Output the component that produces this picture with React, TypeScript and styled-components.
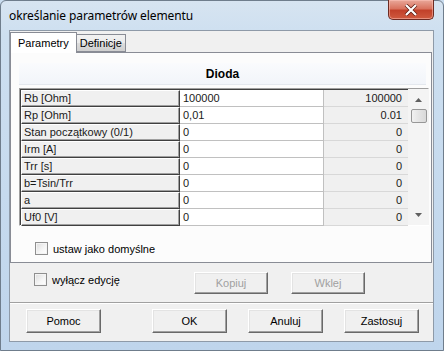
import React from 'react'
import styled, { createGlobalStyle } from 'styled-components'

const GlobalStyle = createGlobalStyle`
  html, body {
    margin: 0;
    padding: 0;
    background: #c9dcef;
  }
  * {
    box-sizing: border-box;
  }
`

const Window = styled.div`
  width: 444px;
  height: 351px;
  display: flex;
  flex-direction: column;
  padding: 0 9px 8px 8px;
  background: linear-gradient(180deg, #d7e4f1 0%, #cddff0 10%, #bfd5ec 100%);
  border: 1px solid #6f7d8c;
  border-radius: 6px 6px 0 0;
  font-family: 'Liberation Sans', Arial, sans-serif;
`

const TitleBar = styled.div`
  height: 29px;
  flex: none;
  display: flex;
  justify-content: space-between;
  align-items: flex-start;
`

const Title = styled.span`
  font-family: 'Noto Sans', 'Open Sans', sans-serif;
  font-size: 12px;
  color: #000;
  padding-top: 6px;
  letter-spacing: -0.1px;
`

const CloseButton = styled.div`
  width: 46px;
  height: 20px;
  margin-top: -1px;
  display: flex;
  align-items: center;
  justify-content: center;
  border: 1px solid #6d2a22;
  border-top: none;
  border-radius: 0 0 5px 5px;
  background: linear-gradient(180deg, #e9a89a 0%, #d9735f 45%, #c2412a 55%, #cf5a3f 100%);
  box-shadow: inset 0 0 0 1px rgba(255, 200, 190, 0.5);
`

const Client = styled.div`
  flex: 1;
  background: #f0f0f0;
  border: 1px solid #8e9aa8;
  display: flex;
  flex-direction: column;
`

const TabStrip = styled.div`
  height: 21px;
  display: flex;
  align-items: flex-end;
  padding-left: 0;
  position: relative;
  z-index: 1;
`

const Tab = styled.div<{ $active?: boolean }>`
  height: ${(p) => (p.$active ? 21 : 18)}px;
  padding: 0 ${(p) => (p.$active ? 7 : 3)}px;
  margin-bottom: ${(p) => (p.$active ? -1 : 0)}px;
  margin-left: ${(p) => (p.$active ? 0 : -1)}px;
  display: flex;
  align-items: center;
  font-size: 11px;
  color: #000;
  border: 1px solid #898c95;
  border-bottom: ${(p) => (p.$active ? 'none' : '1px solid #898c95')};
  background: ${(p) =>
    p.$active ? '#ffffff' : 'linear-gradient(180deg, #f2f2f2 0%, #ebebeb 50%, #dddddd 51%, #cfcfcf 100%)'};
`

const Panel = styled.div`
  height: 211px;
  margin-right: 1px;
  border: 1px solid #898c95;
  background: #fcfcfc;
  display: flex;
  flex-direction: column;
  padding: 10px 5px 0 8px;
`

const Header = styled.div`
  height: 22px;
  display: flex;
  align-items: center;
  justify-content: center;
  font-weight: bold;
  font-size: 12px;
  background: linear-gradient(180deg, #fafbfd 0%, #f2f5fa 100%);
  border-bottom: 1px solid #e4e8ee;
  margin-bottom: 3px;
`

const GridFrame = styled.div`
  display: flex;
  width: 410px;
  height: 138px;
  border-top: 1px solid #a0a0a0;
  border-left: 1px solid #a0a0a0;
  border-right: 1px solid #fff;
  border-bottom: 1px solid #fff;
`

const Table = styled.div`
  display: grid;
  grid-template-columns: 159px 144px 84px;
  grid-auto-rows: 17px;
  border-top: 1px solid #404040;
  border-left: 1px solid #404040;
`

const NameCell = styled.div`
  background: #f0f0f0;
  border-top: 1px solid #ffffff;
  border-left: 1px solid #ffffff;
  border-right: 1px solid #404040;
  border-bottom: 1px solid #404040;
  box-shadow: inset -1px -1px 0 #a0a0a0;
  font-size: 11px;
  line-height: 14px;
  padding-left: 2px;
  color: #1a1a1a;
  white-space: nowrap;
  overflow: hidden;
`

const ValueCell = styled.div`
  background: #ffffff;
  border-right: 1px solid #c0c0c0;
  border-bottom: 1px solid #c0c0c0;
  font-size: 11px;
  line-height: 16px;
  padding-left: 3px;
  color: #1a1a1a;
`

const DefaultCell = styled.div`
  background: #f0f0f0;
  border-bottom: 1px solid #d8d8d8;
  font-size: 11px;
  line-height: 16px;
  text-align: right;
  padding-right: 6px;
  color: #1a1a1a;
`

const ScrollBar = styled.div`
  width: 22px;
  display: flex;
  flex-direction: column;
  align-items: center;
  background: #f4f4f4;
  padding: 2px 2px;
`

const Arrow = styled.div`
  height: 17px;
  width: 17px;
  display: flex;
  align-items: center;
  justify-content: center;
`

const Track = styled.div`
  flex: 1;
  width: 100%;
  display: flex;
  flex-direction: column;
  align-items: center;
`

const Thumb = styled.div`
  width: 16px;
  height: 14px;
  margin-top: 1px;
  border: 1px solid #979797;
  border-radius: 2px;
  background: linear-gradient(90deg, #f1f1f1 0%, #e4e4e4 50%, #d9d9d9 100%);
`

const PanelCheckRow = styled.div`
  display: flex;
  align-items: center;
  gap: 5px;
  margin-top: 16px;
  padding-left: 16px;
  font-size: 11px;
`

const CheckBox = styled.span`
  width: 13px;
  height: 13px;
  border: 1px solid #8f8f8f;
  background: linear-gradient(135deg, #dcdcdc 0%, #f6f6f6 60%, #ffffff 100%);
  box-shadow: inset 0 0 0 1px #f4f4f4;
  flex: none;
`

const EditRow = styled.div`
  height: 40px;
  display: flex;
  align-items: center;
  padding-left: 24px;
  border-bottom: 1px solid #a0a0a0;
  box-shadow: 0 1px 0 #ffffff;
  font-size: 11px;
`

const CheckLabel = styled.label`
  display: flex;
  align-items: center;
  gap: 5px;
  width: 160px;
  margin-top: -6px;
`

const Button = styled.div<{ $disabled?: boolean }>`
  width: 75px;
  height: 24px;
  display: flex;
  align-items: center;
  justify-content: center;
  font-size: 11px;
  color: ${(p) => (p.$disabled ? '#a0a0a0' : '#000')};
  background: #f0f0f0;
  border-top: 1px solid #ffffff;
  border-left: 1px solid #ffffff;
  border-right: 1px solid #696969;
  border-bottom: 1px solid #696969;
  box-shadow: inset -1px -1px 0 #a0a0a0, inset 1px 1px 0 #e3e3e3;
`

const SmallButton = styled(Button)`
  width: 74px;
  height: 22px;
`

const EditButtons = styled.div`
  display: flex;
  gap: 23px;
`

const Footer = styled.div`
  flex: 1;
  display: flex;
  align-items: center;
  padding: 0 14px 3px 16px;
`

const FooterRight = styled.div`
  display: flex;
  gap: 21px;
  margin-left: auto;
`

const rows: [string, string, string][] = [
  ['Rb [Ohm]', '100000', '100000'],
  ['Rp [Ohm]', '0,01', '0.01'],
  ['Stan początkowy (0/1)', '0', '0'],
  ['Irm [A]', '0', '0'],
  ['Trr [s]', '0', '0'],
  ['b=Tsin/Trr', '0', '0'],
  ['a', '0', '0'],
  ['Uf0 [V]', '0', '0'],
]

export default function App() {
  return (
    <>
      <GlobalStyle />
      <Window>
        <TitleBar>
          <Title>określanie parametrów elementu</Title>
          <CloseButton>
            <svg width='14' height='12' viewBox='0 0 14 12'>
              <path d='M2 1 L12 11 M12 1 L2 11' stroke='#5a1a10' strokeWidth='3.6' />
              <path d='M2 1 L12 11 M12 1 L2 11' stroke='#ffffff' strokeWidth='2.2' />
            </svg>
          </CloseButton>
        </TitleBar>
        <Client>
          <TabStrip>
            <Tab $active>Parametry</Tab>
            <Tab>Definicje</Tab>
          </TabStrip>
          <Panel>
            <Header>Dioda</Header>
            <GridFrame>
              <Table>
                {rows.map(([name, value, def]) => (
                  <React.Fragment key={name}>
                    <NameCell>{name}</NameCell>
                    <ValueCell>{value}</ValueCell>
                    <DefaultCell>{def}</DefaultCell>
                  </React.Fragment>
                ))}
              </Table>
              <ScrollBar>
                <Arrow>
                  <svg width='7' height='4' viewBox='0 0 7 4'>
                    <path d='M0 4 L3.5 0 L7 4 Z' fill='#606060' />
                  </svg>
                </Arrow>
                <Track>
                  <Thumb />
                </Track>
                <Arrow>
                  <svg width='7' height='4' viewBox='0 0 7 4'>
                    <path d='M0 0 L3.5 4 L7 0 Z' fill='#606060' />
                  </svg>
                </Arrow>
              </ScrollBar>
            </GridFrame>
            <PanelCheckRow>
              <CheckBox />
              ustaw jako domyślne
            </PanelCheckRow>
          </Panel>
          <EditRow>
            <CheckLabel>
              <CheckBox />
              wyłącz edycję
            </CheckLabel>
            <EditButtons>
              <SmallButton $disabled>Kopiuj</SmallButton>
              <SmallButton $disabled>Wklej</SmallButton>
            </EditButtons>
          </EditRow>
          <Footer>
            <Button>Pomoc</Button>
            <FooterRight>
              <Button>OK</Button>
              <Button>Anuluj</Button>
              <Button>Zastosuj</Button>
            </FooterRight>
          </Footer>
        </Client>
      </Window>
    </>
  )
}
